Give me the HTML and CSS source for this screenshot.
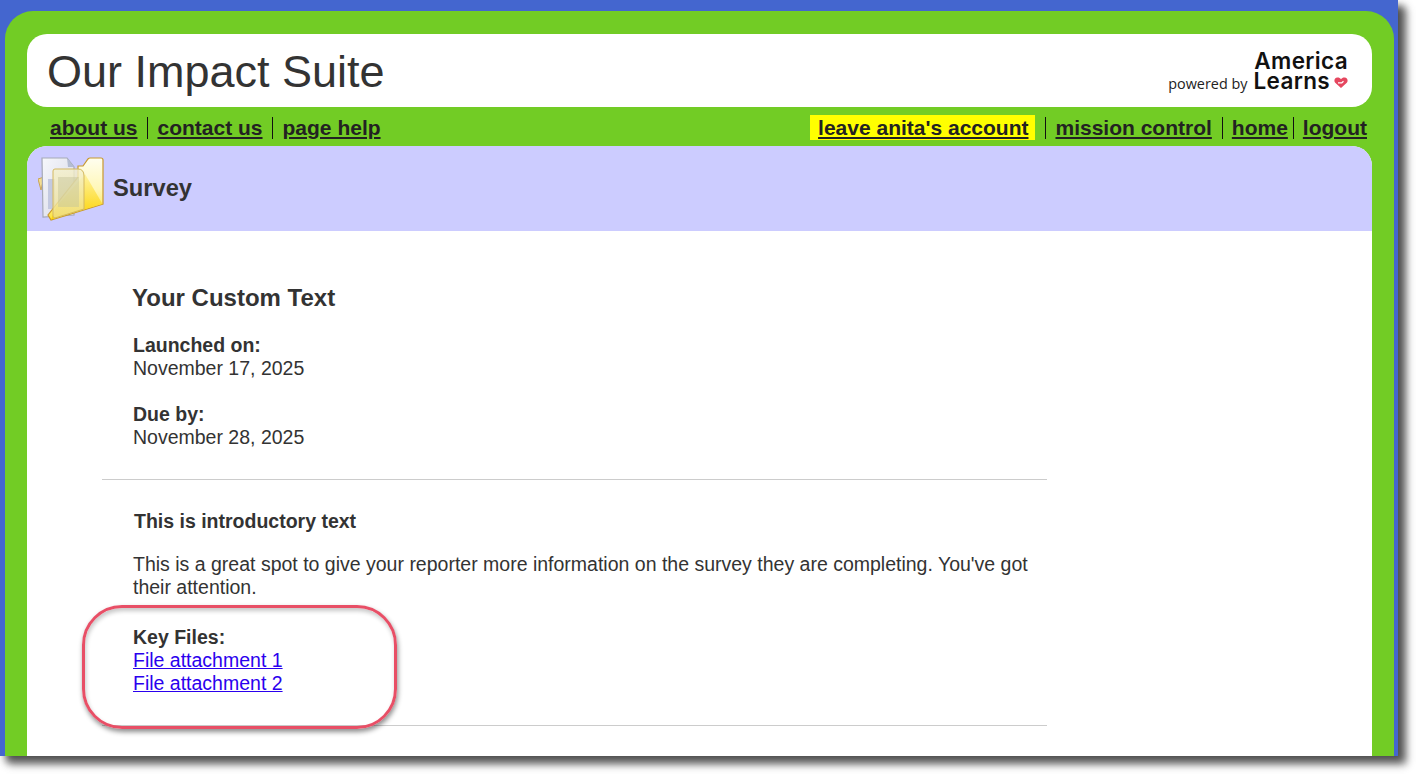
FILE: index.html
```html
<!DOCTYPE html>
<html lang="en">
<head>
<meta charset="utf-8">
<title>Our Impact Suite</title>
<link rel="stylesheet" href="styles.css">
</head>
<body>
<div class="shot">
  <div class="panel">
    <header class="top">
      <div class="suite">Our Impact Suite</div>
      <div class="brand">
        <span class="powered">powered by</span>
        <div class="wordmark">
          <span class="wm-line">America</span>
          <span class="wm-line wm-second">Learns<svg class="heart" viewBox="0 0 14 12" width="14" height="13"><path d="M7 11.500 1.200 6.200C-.4 4.600.4 1.200 3.400 1c1.500-.1 2.800.6 3.600 1.700C7.800 1.600 9.100.9 10.600 1c3 .2 3.800 3.600 2.200 5.200z" fill="#e5475f"/><path d="M4 6.300h3.800l1.700-1.500" stroke="#fff" stroke-width="1.200" fill="none"/></svg></span>
        </div>
      </div>
    </header>
    <nav class="nav">
      <div class="nav-left">
        <a class="nl first" href="#">about us</a>
        <a class="nl" href="#">contact us</a>
        <a class="nl" href="#">page help</a>
      </div>
      <div class="nav-right">
        <a class="leave" href="#">leave anita's account</a>
        <a class="nl" href="#">mission control</a>
        <a class="nl hm" href="#">home</a>
        <a class="nl lo" href="#">logout</a>
      </div>
    </nav>
    <main class="card">
      <div class="card-head">
        <svg class="folder" viewBox="0 0 66 66" width="66" height="66">
          <defs>
            <linearGradient id="fb" x1="0" y1="0" x2="0" y2="1"><stop offset="0" stop-color="#fffef0"/><stop offset=".5" stop-color="#fff7b8"/><stop offset="1" stop-color="#fde23a"/></linearGradient>
            <linearGradient id="wd" x1="0" y1="0" x2="0" y2="1"><stop offset="0" stop-color="#fff3a0"/><stop offset="1" stop-color="#fcd200"/></linearGradient>
            <linearGradient id="pg" x1="0" y1="0" x2="1" y2="1"><stop offset="0" stop-color="#f6f7fb"/><stop offset="1" stop-color="#d6d8e6"/></linearGradient>
            <linearGradient id="sh" x1="0" y1="0" x2="0" y2="1"><stop offset="0" stop-color="#f4f0cc"/><stop offset="1" stop-color="#efe08a"/></linearGradient>
          </defs>
          <path d="M0 22 3 33 6 20z" fill="#f3dd90" stroke="#c9a455" stroke-width="1"/>
          <path d="M4 1H29L36 10V58L5 60z" fill="url(#pg)" stroke="#a6aab6" stroke-width="1.200"/>
          <path d="M29 1 30 10H36z" fill="#b4bdd2"/>
          <rect x="10" y="22" width="7" height="30" fill="#c3c9e0"/>
          <path d="M40 9H45L50 2Q51 1 52 1H63Q65 1 65 3V47L13 63 10 58 40 20z" fill="url(#fb)" stroke="#c8992e" stroke-width="1.200"/>
          <path d="M47 17 64.500 47 13 62.500 18 50z" fill="url(#wd)"/>
          <path d="M17 12H40Q46 12 46 19V52L17 61Q15 61 15 59V14Q15 12 17 12Z" fill="url(#sh)" fill-opacity=".8" stroke="#d3b860" stroke-width="1"/>
          <rect x="20" y="20" width="21" height="30" fill="#c4c49a" opacity=".45"/>
        </svg>
        <h1 class="card-title">Survey</h1>
      </div>
      <div class="body">
        <section class="meta">
          <h2 class="custom">Your Custom Text</h2>
          <p class="line"><b>Launched on:</b><br>November 17, 2025</p>
          <p class="line"><b>Due by:</b><br>November 28, 2025</p>
        </section>
        <section class="intro">
          <h3 class="intro-title">This is introductory text</h3>
          <p class="line">This is a great spot to give your reporter more information on the survey they are completing. You've got their attention.</p>
          <p class="line files"><b>Key Files:</b><br><a href="#">File attachment 1</a><br><a href="#">File attachment 2</a></p>
          <div class="callout"></div>
        </section>
      </div>
    </main>
  </div>
</div>
</body>
</html>
```
FILE: styles.css
```css
html, body {
  margin: 0;
  padding: 0;
  background: #fff;
  overflow: hidden;
}
body {
  width: 1421px;
  height: 779px;
  font-family: "Liberation Sans", Arial, sans-serif;
  color: #333;
}
.shot {
  width: 1398px;
  height: 756px;
  background: #4466cf;
  overflow: hidden;
  box-shadow: 6px 6px 8px #4d4d4d, 9px 9px 8px #bbb;
  padding: 11px 4px 0 5px;
  box-sizing: border-box;
}
.panel {
  background: #72cc25;
  border-radius: 28px 28px 0 0;
  height: 800px;
  padding: 23px 22px 0;
}
.top {
  height: 73px;
  background: #fff;
  border-radius: 20px;
  display: flex;
  justify-content: space-between;
  align-items: center;
  padding: 0 24px 0 20px;
}
.suite {
  font-size: 45px;
  line-height: 75px;
  margin-top: 2px;
  color: #333;
}
.brand {
  display: flex;
  align-items: flex-end;
  gap: 6px;
  margin-top: 1px;
  color: #222;
}
.powered {
  font-family: "Open Sans", sans-serif;
  font-size: 14.4px;
  line-height: 18px;
  margin-bottom: -2px;
}
.wordmark {
  display: flex;
  flex-direction: column;
  align-items: flex-end;
  font-family: Inter, sans-serif;
  font-weight: 600;
  font-size: 22.500px;
  letter-spacing: .35px;
  line-height: 20px;
  color: #111;
}
.wm-line { display: block; }
.wm-second {
  display: flex;
  align-items: center;
  gap: 4px;
}
.heart { margin-top: 2px; }
.nav {
  height: 39px;
  display: flex;
  justify-content: space-between;
  align-items: center;
  padding: 3px 5px 0 23px;
  box-sizing: border-box;
}
.nav-left, .nav-right {
  display: flex;
  align-items: center;
}
.nl {
  font-size: 21px;
  font-weight: 700;
  color: #222;
  line-height: 22px;
  padding: 0 10px 0 9px;
  border-left: 1px solid #111;
  text-decoration: underline;
}
.nav-left .nl {
  padding: 0 9px 0 10px;
}
.nav-left .nl.first {
  border-left: 0;
  padding-left: 0;
}
.nl.hm { padding-right: 5px; }
.nl.lo { padding-right: 0; }
.leave {
  background: #ffff00;
  color: #222;
  font-size: 21px;
  font-weight: 700;
  line-height: 25px;
  padding: 0 7px 0 8px;
  margin: 0 10px 2px 0;
}
.card {
  background: #fff;
  border-radius: 20px 20px 0 0;
  height: 640px;
}
.card-head {
  height: 85px;
  background: #ccccff;
  border-radius: 20px 20px 0 0;
  display: flex;
  align-items: center;
  padding-left: 11px;
  gap: 9px;
}
.folder { flex: none; margin-top: 2px; }
.card-title {
  margin: 0;
  font-size: 23.700px;
  font-weight: 700;
  color: #333;
}
.body {
  width: 945px;
  margin-left: 75px;
}
.meta {
  padding: 53px 0 30px 31px;
  border-bottom: 1px solid #ccc;
}
.custom {
  margin: 0 0 22px -1px;
  font-size: 24px;
  line-height: 28px;
  font-weight: 700;
}
.line {
  margin: 0 0 23px;
  font-size: 19.500px;
  line-height: 23px;
}
.meta .line:last-child { margin-bottom: 0; }
.intro {
  position: relative;
  padding: 30px 0 30px 31px;
  border-bottom: 1px solid #ccc;
}
.intro-title {
  margin: 0 0 20px 1px;
  font-size: 19.500px;
  line-height: 23px;
  font-weight: 700;
}
.line.files {
  margin: 27px 0 0;
}
.files a { color: #2a00ee; }
.callout {
  position: absolute;
  left: -20px;
  top: 125px;
  width: 309px;
  height: 118px;
  border: 3px solid #e84f66;
  border-radius: 40px;
  box-shadow: 1px 3px 5px rgba(0,0,0,.45), inset 1px 3px 4px rgba(0,0,0,.22);
}
```
